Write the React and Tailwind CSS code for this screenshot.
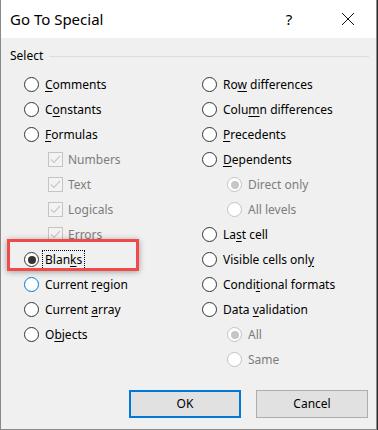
import React from 'react';

const font = { fontFamily: '"Noto Sans", "Open Sans", sans-serif' };

const Radio = ({ checked, disabled, focus }) => {
  const ring = disabled
    ? 'border-[#c2c2c2]'
    : focus
      ? 'border-[#0078d7]'
      : 'border-[#333333]';
  return (
    <span className={`w-[15px] h-[15px] shrink-0 rounded-full border bg-white flex items-center justify-center ${ring}`}>
      {checked && (
        <span className={`w-[8px] h-[8px] rounded-full ${disabled ? 'bg-[#c6c6c6]' : 'bg-[#333333]'}`} />
      )}
    </span>
  );
};

const Check = () => (
  <span className="w-[15px] h-[15px] shrink-0 border border-[#c4c4c4] bg-[#f3f3f3] flex items-center justify-center">
    <svg width="11" height="9" viewBox="0 0 11 9" fill="none">
      <path d="M1 4.5 L4 7.5 L10 1" stroke="#c8c8c8" strokeWidth="1.2" />
    </svg>
  </span>
);

// label with one underlined access key
const Label = ({ pre, key_, post, disabled, dotted }) => (
  <span
    className={`leading-[16px] ${disabled ? 'text-[#7d7d7d]' : 'text-black'} ${
      dotted ? 'outline-1 outline-dotted outline-black outline-offset-[1px] px-[1px] -ml-[1px]' : ''
    }`}
  >
    {pre}
    {key_ && <span className="underline underline-offset-2 decoration-1">{key_}</span>}
    {post}
  </span>
);

const RadioRow = ({ sub, ...p }) => (
  <div className={`h-[25px] flex items-center gap-[6px] ${sub ? 'pl-[25px]' : ''}`}>
    <Radio checked={p.checked} disabled={p.disabled} focus={p.focus} />
    <Label {...p} />
  </div>
);

const CheckRow = ({ text }) => (
  <div className="h-[25px] flex items-center gap-[5px] pl-[24px]">
    <Check />
    <Label pre={text} disabled />
  </div>
);

export default function App() {
  return (
    <div className="w-[378px] h-[430px] bg-[#2d2d2d] text-[12px]" style={font}>
      <div className="w-[377px] h-[430px] border-x border-b border-[#8a8a8a] bg-[#f0f0f0] flex flex-col">
        <div className="h-[38px] bg-white flex items-center pl-[9px]">
          <span className="text-[15px] text-black flex-1">Go To Special</span>
          <span className="text-[15px] text-black w-[12px] text-center mr-[46px]">?</span>
          <svg width="14" height="14" viewBox="0 0 14 14" className="mr-[21px]">
            <path d="M1 1 L13 13 M13 1 L1 13" stroke="#111" strokeWidth="1" />
          </svg>
        </div>

        <div className="relative flex-1">
          <div className="flex items-center h-[18px] mt-[9px] pl-[9px] pr-[7px]">
            <span className="text-black">Select</span>
            <div className="flex-1 h-px bg-[#dcdcdc] ml-[6px]" />
          </div>

          <div className="flex mt-[7px]">
            <div className="w-[201px] pl-[23px]">
              <RadioRow pre="" key_="C" post="omments" />
              <RadioRow pre="C" key_="o" post="nstants" />
              <RadioRow pre="" key_="F" post="ormulas" />
              <CheckRow text="Numbers" />
              <CheckRow text="Text" />
              <CheckRow text="Logicals" />
              <CheckRow text="Errors" />
              <RadioRow pre="Blan" key_="k" post="s" checked dotted />
              <RadioRow pre="Current " key_="r" post="egion" focus />
              <RadioRow pre="Current " key_="a" post="rray" />
              <RadioRow pre="O" key_="b" post="jects" />
            </div>
            <div className="flex-1">
              <RadioRow pre="Ro" key_="w" post=" differences" />
              <RadioRow pre="Colu" key_="m" post="n differences" />
              <RadioRow pre="" key_="P" post="recedents" />
              <RadioRow pre="" key_="D" post="ependents" />
              <RadioRow sub pre="Direct only" checked disabled />
              <RadioRow sub pre="All levels" disabled />
              <RadioRow pre="La" key_="s" post="t cell" />
              <RadioRow pre="Visible cells onl" key_="y" post="" />
              <RadioRow pre="Condi" key_="t" post="ional formats" />
              <RadioRow pre="Data " key_="v" post="alidation" />
              <RadioRow sub pre="All" checked disabled />
              <RadioRow sub pre="Same" disabled />
            </div>
          </div>

          <div className="flex justify-end gap-[15px] pr-[8px] mt-[18px]">
            <button className="w-[112px] h-[28px] border-2 border-[#0078d7] bg-[#e1e1e1] text-black text-[12px]">
              OK
            </button>
            <button className="w-[112px] h-[28px] border border-[#adadad] bg-[#e1e1e1] text-black text-[12px]">
              Cancel
            </button>
          </div>

          {/* highlight annotation */}
          <div className="absolute left-[6px] top-[201px] w-[132px] h-[32px] border-[3px] border-[#ef4b4b] shadow-[0_1px_6px_rgba(0,0,0,0.35)]" />
        </div>
      </div>
    </div>
  );
}
